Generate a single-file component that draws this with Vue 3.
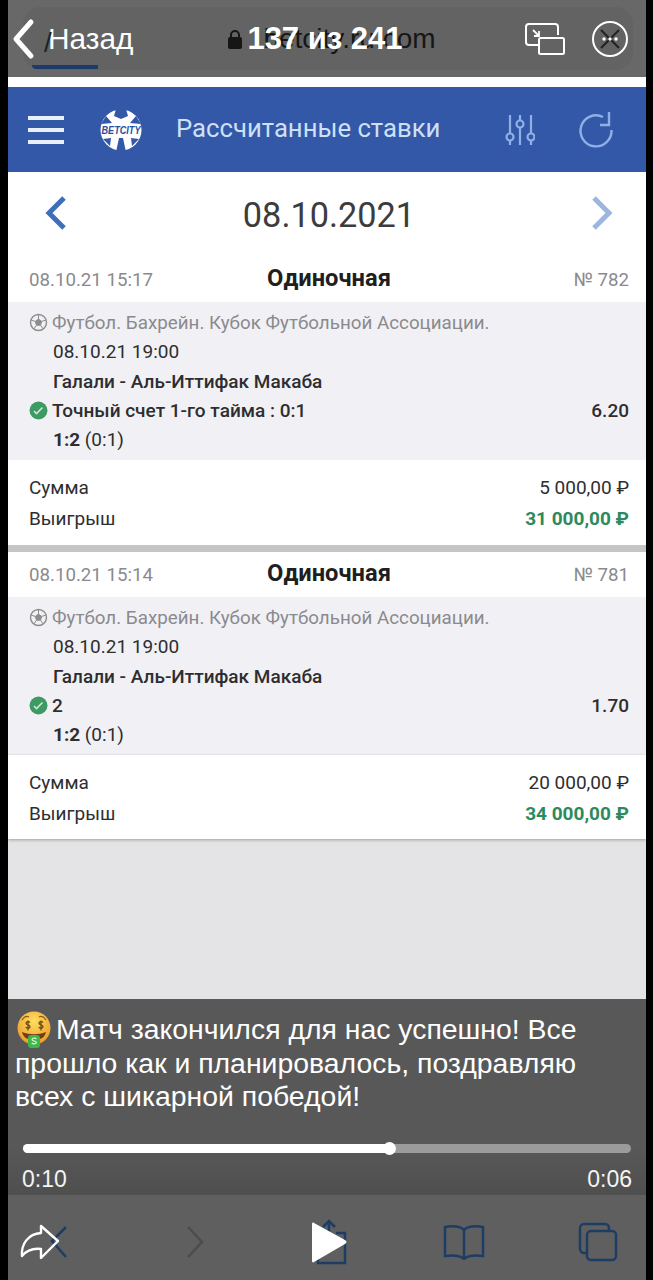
<script setup>
const bets = [
  { created: '08.10.21 15:17', num: '№ 782', market: 'Точный счет 1-го тайма : 0:1', odd: '6.20', stake: '5 000,00 ₽', win: '31 000,00 ₽' },
  { created: '08.10.21 15:14', num: '№ 781', market: '2', odd: '1.70', stake: '20 000,00 ₽', win: '34 000,00 ₽' }
]
</script>

<template>
  <div class="screen">
    <div class="page">
      <div class="topbar">
        <div class="pill">
          <div class="back">
            <svg class="chevron" width="24" height="42" viewBox="0 0 24 42"><path d="M20 4 5 21l15 17" fill="none" stroke="#fff" stroke-width="5" stroke-linecap="round" stroke-linejoin="round"/></svg>
            <span class="ghost-a">/</span>
            <span class="back-label">Назад</span>
          </div>
          <div class="title">
            <svg width="16" height="22" viewBox="0 0 16 22"><path d="M4 10V7a4 4 0 0 1 8 0v3" fill="none" stroke="#161616" stroke-width="2"/><rect x="1" y="9" width="14" height="12" rx="2" fill="#161616"/></svg>
            <div class="title-stack">
              <span class="ghost-url">betcity.ru.com</span>
              <span class="counter">137 из 241</span>
            </div>
          </div>
          <div class="top-icons">
            <svg width="42" height="34" viewBox="0 0 42 34" fill="none" stroke="#fff" stroke-width="2"><path d="M14 23H5a3 3 0 0 1-3-3V5a3 3 0 0 1 3-3h26a3 3 0 0 1 3 3v8"/><rect x="15" y="16" width="25" height="16" rx="1.500"/><path d="M9 8l6 6M15 9v5h-5" stroke-width="1.800"/></svg>
            <svg width="38" height="38" viewBox="0 0 38 38" fill="none"><circle cx="19" cy="19" r="17" stroke="#fff" stroke-width="2"/><path d="M10 10l18 18M28 10 10 28" stroke="#222" stroke-width="2"/><circle cx="13" cy="19" r="1.700" fill="#fff"/><circle cx="19" cy="19" r="1.700" fill="#fff"/><circle cx="25" cy="19" r="1.700" fill="#fff"/></svg>
          </div>
          <i class="tab-line"></i>
        </div>
      </div>

      <div class="gap"></div>

      <header class="app-head">
        <div class="burger"><i></i><i></i><i></i></div>
        <svg class="logo" width="42" height="44" viewBox="0 0 42 44">
          <circle cx="21" cy="22" r="20.500" fill="#fff"/>
          <path d="M16 1h10l2 7-7 3-7-3zM19 30h4l3 14H16zM1 16l5-8 6 7zM41 16l-5-8-6 7zM3 31l8-1-1 8zM39 31l-8-1 1 8z" fill="#3358a8"/>
          <text x="21" y="26" text-anchor="middle" textLength="39" lengthAdjust="spacingAndGlyphs" class="logo-text">BETCITY</text>
        </svg>
        <h1>Рассчитанные ставки</h1>
        <svg class="filter" width="30" height="36" viewBox="0 0 30 36" fill="none" stroke="#8fb0e6" stroke-width="2.200"><path d="M5 3v18.500M5 28.500V33M15 3v5.500M15 15.500V33M26 3v18.500M26 28.500V33"/><circle cx="5" cy="25" r="3.500"/><circle cx="15" cy="12" r="3.500"/><circle cx="26" cy="25" r="3.500"/></svg>
        <svg class="reload" width="40" height="40" viewBox="0 0 40 40" fill="none" stroke="#8fb0e6" stroke-width="2.400"><path d="M27 7A15.500 15.500 0 1 0 35.500 20"/><path d="M33 2v13h-9"/></svg>
      </header>

      <nav class="date-bar">
        <svg width="24" height="36" viewBox="0 0 24 36"><path d="M20 3 5 18l15 15" fill="none" stroke="#3f6fbb" stroke-width="5"/></svg>
        <span class="date">08.10.2021</span>
        <svg width="24" height="36" viewBox="0 0 24 36"><path d="M4 3l15 15L4 33" fill="none" stroke="#9db6de" stroke-width="5"/></svg>
      </nav>

      <section v-for="bet in bets" :key="bet.num" class="bet">
        <div class="bet-head">
          <span class="muted">{{ bet.created }}</span>
          <b class="bet-type">Одиночная</b>
          <span class="muted">{{ bet.num }}</span>
        </div>
        <div class="bet-body">
          <div class="row league">
            <svg class="mark" width="19" height="19" viewBox="0 0 19 19" fill="none" stroke="#8d8d8d"><circle cx="9.500" cy="9.500" r="8" stroke-width="1.400"/><path d="M9.500 6l3.200 2.400-1.200 3.800h-4L6.300 8.400z" fill="#8d8d8d"/><path d="M9.500 1.500V6M12.700 8.400l4.500-1.400M11.500 12.200l2.700 3.700M7.500 12.200l-2.700 3.700M6.300 8.400 1.800 7"/></svg>
            <span>Футбол. Бахрейн. Кубок Футбольной Ассоциации.</span>
          </div>
          <div class="row plain">08.10.21 19:00</div>
          <div class="row plain strong">Галали - Аль-Иттифак Макаба</div>
          <div class="row strong">
            <svg class="mark" width="19" height="19" viewBox="0 0 19 19"><circle cx="9.500" cy="9.500" r="9" fill="#3d9a62"/><path d="M5 10l2.500 2.500L13.500 6.500" fill="none" stroke="#cfe8d7" stroke-width="1.600"/></svg>
            <span class="market">{{ bet.market }}</span>
            <span>{{ bet.odd }}</span>
          </div>
          <div class="row plain"><span><b>1:2</b> (0:1)</span></div>
        </div>
        <div class="bet-foot">
          <div class="sum"><span>Сумма</span><span>{{ bet.stake }}</span></div>
          <div class="sum"><span>Выигрыш</span><b class="win">{{ bet.win }}</b></div>
        </div>
      </section>

      <div class="filler"></div>

      <div class="caption">
        <p>
          <svg class="emoji" width="34" height="38" viewBox="0 0 34 38">
            <defs>
              <radialGradient id="face" cx="50%" cy="30%" r="70%">
                <stop offset="0" stop-color="#ffdf5e"/>
                <stop offset="1" stop-color="#ec9a2c"/>
              </radialGradient>
            </defs>
            <circle cx="17" cy="17" r="16.500" fill="url(#face)"/>
            <path d="M5 9c2-3 5-4 7-3M29 9c-2-3-5-4-7-3" stroke="#8a5a1c" stroke-width="1.200" fill="none"/>
            <path d="M13 11.500c-1-1.500-4-1-4 .7 0 2 4 1.500 4 3.500 0 1.800-3 2-4.200.5M11 9.500v10M26 11.500c-1-1.500-4-1-4 .7 0 2 4 1.500 4 3.500 0 1.800-3 2-4.200.5M24 9.500v10" stroke="#6b4a14" stroke-width="1.300" fill="none"/>
            <path d="M5 21c8 3 16 3 24 0-1 5-5 8-12 8S6 26 5 21z" fill="#6e3f17"/>
            <rect x="11" y="24" width="12" height="13" rx="3" fill="#3fb54a"/>
            <path d="M19.500 28c-1-1.300-4.500-1-4.500.6 0 1.800 4.500 1.200 4.500 3 0 1.600-3.600 1.700-4.800.4" stroke="#d8f7cf" stroke-width="1.200" fill="none"/>
          </svg>
          Матч закончился для нас успешно! Все прошло как и планировалось, поздравляю всех с шикарной победой!
        </p>
        <div class="progress">
          <div class="progress-fill" :style="{ width: '60.300%' }"><i></i></div>
        </div>
        <div class="times"><span>0:10</span><span>0:06</span></div>
      </div>

      <footer class="toolbar">
        <svg width="48" height="38" viewBox="0 0 48 38" fill="none">
          <path d="M47 4 33 18l14 16" stroke="#1d3d66" stroke-width="2.500"/>
          <path d="M22 3l17 15-17 17v-9c-8-1-14 1-19 7C2 21 9 11 22 10z" stroke="#fff" stroke-width="2.400" stroke-linejoin="round"/>
        </svg>
        <svg class="t-next" width="22" height="36" viewBox="0 0 22 36"><path d="M4 3l14 15L4 33" fill="none" stroke="#4c4c4c" stroke-width="2.500"/></svg>
        <svg class="t-share" width="40" height="46" viewBox="0 0 40 46" fill="none">
          <path d="M19 16V3M13 8l6-6 6 6M12 14H8v30h27V14h-9" stroke="#1d3d66" stroke-width="2.500"/>
          <path d="M2 5c0-1 1-2 2-1l31 17c2 1 2 3 0 4L4 43c-1 1-2 0-2-1z" fill="#fff"/>
        </svg>
        <svg class="t-book" width="42" height="36" viewBox="0 0 42 36" fill="none" stroke="#1d3d66" stroke-width="2.500"><path d="M21 6C17 2 8 2 2 3v29c7-1 15-1 19 3 4-4 12-4 19-3V3c-6-1-15-1-19 3zM21 6v28"/></svg>
        <svg class="t-tabs" width="40" height="40" viewBox="0 0 40 40" fill="none" stroke="#1d3d66" stroke-width="2.500"><rect x="9" y="9" width="29" height="29" rx="4"/><path d="M9 31H6a4 4 0 0 1-4-4V6a4 4 0 0 1 4-4h21a4 4 0 0 1 4 4v3"/></svg>
      </footer>
    </div>
  </div>
</template>

<style scoped>
.screen {
  width: 653px;
  height: 1280px;
  background: #000;
  padding: 0 7px 0 8px;
  box-sizing: border-box;
  font-family: Roboto, "Noto Sans", sans-serif;
  overflow: hidden;
}
.page {
  height: 100%;
  display: flex;
  flex-direction: column;
  background: #e4e4e6;
}
.topbar {
  height: 77px;
  flex: none;
  background: #686868;
  padding-top: 7px;
  box-sizing: border-box;
}
.pill {
  position: relative;
  height: 63px;
  margin: 0 13px 0 15px;
  border-radius: 18px;
  background: #636363;
  display: grid;
  grid-template-columns: 1fr auto 1fr;
  align-items: center;
}
.back {
  position: relative;
  display: flex;
  align-items: center;
  margin-left: -12px;
}
.chevron { flex: none; margin-top: 1px; }
.back-label {
  color: #fff;
  font-size: 29.800px;
  margin-left: 13px;
  font-family: "Liberation Sans", sans-serif;
}
.ghost-a {
  position: absolute;
  left: 33px;
  top: 10px;
  color: #222;
  font-size: 28px;
  font-family: "Liberation Sans", sans-serif;
}
.title {
  display: flex;
  align-items: center;
  gap: 4px;
  margin-left: 7px;
}
.title-stack { display: grid; }
.title-stack span { grid-area: 1 / 1; white-space: nowrap; }
.ghost-url {
  color: #161616;
  font-size: 28px;
  font-family: "Liberation Sans", sans-serif;
  margin: 2px 0 0 16px;
}
.counter {
  color: #fff;
  font-size: 31px;
  font-weight: 700;
  font-family: "Liberation Sans", sans-serif;
}
.top-icons {
  display: flex;
  justify-content: flex-end;
  align-items: center;
  gap: 25px;
  padding-right: 4px;
}
.tab-line {
  position: absolute;
  left: 9px;
  bottom: 1px;
  width: 66px;
  height: 4px;
  background: #1c3a6c;
  border-radius: 0 0 0 8px;
}
.gap {
  height: 10px;
  flex: none;
  background: #fff;
}
.app-head {
  height: 85px;
  flex: none;
  background: #3358a8;
  display: flex;
  align-items: center;
  box-sizing: border-box;
  padding-left: 20px;
}
.burger {
  width: 36px;
  display: flex;
  flex-direction: column;
  gap: 8px;
}
.burger i {
  height: 4px;
  background: #e8f0fa;
}
.logo { margin-left: 36px; flex: none; }
.logo-text {
  font-family: "Liberation Sans", sans-serif;
  font-size: 10px;
  font-style: italic;
  font-weight: 700;
  fill: #2c4f9c;
}
h1 {
  margin: -3px 0 0 34px;
  font-size: 25.700px;
  font-weight: 400;
  color: #cfe0f6;
  white-space: nowrap;
}
.filter { margin-left: 65px; flex: none; }
.reload { margin-left: 41px; flex: none; }
.date-bar {
  height: 85px;
  flex: none;
  background: #fff;
  display: flex;
  align-items: center;
  justify-content: space-between;
  padding: 0 32px 0 36px;
}
.date-bar svg { margin-top: -3px; }
.date {
  font-size: 34.300px;
  color: #3c3c3e;
}
.bet {
  flex: none;
  color: #2e2e30;
  font-size: 19px;
}
.bet + .bet { border-top: 7px solid #c5c5c5; }
.bet-head {
  height: 45px;
  background: #fff;
  display: grid;
  grid-template-columns: 1fr auto 1fr;
  align-items: center;
  padding: 0 17px 0 21px;
}
.bet-head span:last-child { text-align: right; }
.muted { color: #8a8a8e; font-size: 18.700px; }
.bet-type {
  font-size: 23.700px;
  font-weight: 700;
  color: #1f1f21;
  margin-top: -3px;
}
.bet-body {
  height: 158px;
  box-sizing: border-box;
  background: #f1f1f5;
  padding: 6px 17px 0 21px;
}
.row {
  height: 29.250px;
  display: flex;
  align-items: center;
  gap: 4px;
  white-space: nowrap;
}
.mark { flex: none; }
.league { color: #8a8a8e; font-size: 18.800px; }
.plain { padding-left: 24px; }
.strong { font-weight: 500; }
.market { flex: 1; }
.bet-foot {
  height: 85px;
  box-sizing: border-box;
  background: #fff;
  padding: 12px 17px 0 21px;
}
.bet + .bet .bet-foot {
  height: 84px;
  box-shadow: 0 1px 3px rgba(0, 0, 0, .3);
}
.sum {
  height: 31px;
  display: flex;
  align-items: center;
  justify-content: space-between;
}
.win {
  color: #2c8a5c;
  font-weight: 700;
}
.filler { flex: 1; }
.caption {
  height: 196px;
  flex: none;
  box-sizing: border-box;
  background: linear-gradient(#585858 75%, #4f4f4f);
  padding: 14px 14px 0 7px;
  color: #fff;
}
.caption p {
  margin: 0;
  font-family: "Liberation Sans", sans-serif;
  font-size: 28.400px;
  line-height: 33.500px;
  width: 600px;
  height: 128px;
}
.emoji {
  vertical-align: -5px;
  margin: -6px -3px -5px 2px;
}
.progress {
  margin: 3px 0 0 8px;
  height: 9px;
  border-radius: 5px;
  background: #9b9b9b;
  width: 608px;
}
.progress-fill {
  position: relative;
  height: 100%;
  border-radius: 5px;
  background: #fff;
}
.progress-fill i {
  position: absolute;
  right: -6px;
  top: -2px;
  width: 13px;
  height: 13px;
  border-radius: 50%;
  background: #fff;
}
.times {
  display: flex;
  justify-content: space-between;
  margin: 13px 0 0 7px;
  width: 610px;
  font-family: "Liberation Sans", sans-serif;
  font-size: 23px;
  color: #f4f4f4;
}
.toolbar {
  height: 85px;
  flex: none;
  box-sizing: border-box;
  background: #5f5f5f;
  display: flex;
  align-items: center;
  padding: 8px 0 0 11px;
}
.t-next { margin-left: 117px; }
.t-share { margin-left: 104px; }
.t-book { margin-left: 93px; }
.t-tabs { margin-left: 93px; }
</style>

<style>
html, body { margin: 0; background: #000; }
</style>
